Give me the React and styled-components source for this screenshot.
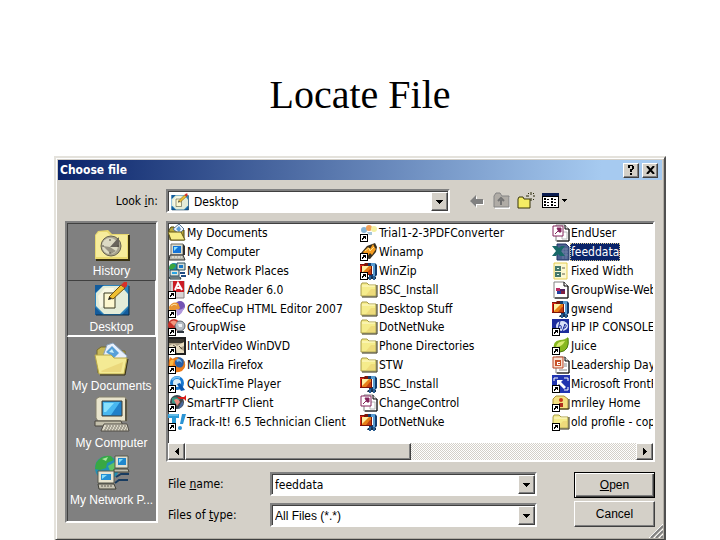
import { useState } from 'react'
import styled, { createGlobalStyle, css } from 'styled-components'

const GlobalStyle = createGlobalStyle`
    * {
        box-sizing: border-box;
    }
    body {
        margin: 0;
        background: #fff;
        color: #000;
        overflow: hidden;
    }
    button,
    input,
    select {
        font: inherit;
        color: inherit;
        padding: 0;
        margin: 0;
        border: 0;
        outline: 0;
        border-radius: 0;
        background: transparent;
    }
`

const ui = '"DejaVu Sans Condensed", "DejaVu Sans", sans-serif'
const sans = '"Liberation Sans", Arial, sans-serif'

const raised = css`
    background: #d4d0c8;
    border: 1px solid;
    border-color: #fff #404040 #404040 #fff;
    box-shadow: inset -1px -1px 0 #808080;
`

const sunken = css`
    border: 2px solid;
    border-color: #808080 #fff #fff #808080;
    box-shadow: inset 1px 1px 0 #404040;
`

const Title = styled.h1`
    margin: 71px 0 37px;
    font: 400 40px/48px 'Liberation Serif', 'Times New Roman', serif;
    text-align: center;
`

const Dialog = styled.section`
    position: relative;
    margin: 0 54px;
    padding: 2px;
    border: 2px solid;
    border-color: #e4e2dc #505050 #404040 #e4e2dc;
    background: #d4d0c8;
    box-shadow: inset 1px 1px 0 #fff, inset -1px -1px 0 #b0aca4;
    font: 12px/16px ${ui};
`

const TitleBar = styled.header`
    display: flex;
    align-items: center;
    gap: 3px;
    height: 20px;
    padding: 0 4px 0 2px;
    background: linear-gradient(90deg, #0a246a, #a6caf0 90%);
`

const Caption = styled.h2`
    flex: 1;
    margin: 0;
    font: 700 12px/16px ${ui};
    color: #fff;
`

const CaptionButton = styled.button`
    display: grid;
    place-items: center;
    width: 16px;
    height: 15px;
    ${raised}
`

const Body = styled.div`
    display: grid;
    grid-template-columns: 93px minmax(0, 1fr);
    gap: 8px;
    padding: 9px 7px 10px;
`

const LookLabel = styled.label`
    align-self: center;
    justify-self: end;
`

const Toolbar = styled.div`
    display: flex;
    align-items: center;
    padding-right: 88px;
`

const Combo = styled.div`
    display: flex;
    flex: 1;
    align-items: center;
    min-width: 0;
    height: 24px;
    padding: 1px 0 0 ${(p) => (p.$icon ? 3 : 2)}px;
    background: #fff;
    ${sunken}

    select,
    input {
        flex: 1;
        min-width: 0;
        height: 18px;
        appearance: none;
        padding-left: ${(p) => (p.$icon ? 5 : 1)}px;
    }
`

const DropButton = styled.span`
    display: grid;
    place-items: center;
    align-self: stretch;
    width: 17px;
    pointer-events: none;
    ${raised}
`

const Tools = styled.div`
    display: flex;
    align-items: center;
    gap: 6px;
    margin-left: 19px;

    button {
        display: grid;
        height: 18px;
    }
`

const Places = styled.nav`
    display: grid;
    grid-template-rows: repeat(5, 1fr);
    height: 302px;
    padding-bottom: 12px;
    background: #808080;
    ${sunken}
`

const Place = styled.button`
    display: flex;
    flex-direction: column;
    align-items: center;
    justify-content: flex-end;
    gap: 2px;
    border: 1px solid transparent;
    font: 12px/16px ${sans};
    color: #fff;
    white-space: nowrap;
    ${(p) =>
        p.$active &&
        css`
            border-color: #404040 #fff #fff #404040;
            border-bottom-width: 2px;
        `}
`

const Right = styled.div`
    display: grid;
    grid-template-rows: 241px auto;
    align-content: start;
    gap: 10px;
    min-width: 0;
`

const FileView = styled.div`
    display: flex;
    flex-direction: column;
    min-width: 0;
    background: #fff;
    ${sunken}
`

const FileList = styled.div`
    display: grid;
    flex: 1;
    grid-auto-flow: column;
    grid-template-rows: repeat(11, 1fr);
    grid-auto-columns: 192px;
    overflow: hidden;
    padding: 1px 0 12px;
`

const FileItem = styled.button`
    display: flex;
    align-items: center;
    text-align: left;
    white-space: nowrap;

    svg {
        flex: none;
    }

    ${(p) =>
        p.$selected &&
        css`
            span {
                background: #0a246a;
                color: #fff;
                outline: 1px dotted #d8c890;
                outline-offset: -1px;
            }
        `}
`

const FileName = styled.span`
    padding: 0 1px;
    line-height: 18px;
`

const ScrollBar = styled.div`
    display: flex;
    height: 17px;
    background: repeating-conic-gradient(#d4d0c8 0 25%, #fff 0 50%) 0 0 / 2px 2px;
`

const ScrollButton = styled.button`
    display: grid;
    place-items: center;
    width: 17px;
    ${raised}
`

const ScrollTrack = styled.div`
    flex: 1;
    display: flex;
`

const ScrollThumb = styled.div`
    width: 50%;
    ${raised}
`

const Form = styled.form`
    display: grid;
    grid-template-columns: minmax(0, 1fr) 81px;
    column-gap: 37px;
    padding-left: 2px;
`

const Fields = styled.div`
    display: grid;
    gap: 7px;
`

const Field = styled.div`
    display: flex;
    align-items: center;

    label {
        width: 102px;
    }
`

const TypeCombo = styled(Combo)`
    font-family: ${sans};
`

const Buttons = styled.div`
    display: grid;
    gap: 3px;
`

const PushButton = styled.button`
    height: 26px;
    ${raised}
    font: 12px/16px ${sans};
    ${(p) =>
        p.$default &&
        css`
            border-color: #000;
            box-shadow: inset 1px 1px 0 #fff, inset -1px -1px 0 #404040,
                inset -2px -2px 0 #808080;
        `}
`

const Grip = styled.svg`
    position: absolute;
    right: 1px;
    bottom: 1px;
`

const DownArrow = () => (
    <svg width="7" height="4" shapeRendering="crispEdges" aria-hidden="true">
        <path d="M0 0H7V1H6V2H5V3H4V4H3V3H2V2H1V1H0Z" />
    </svg>
)

const Shortcut = () => (
    <g shapeRendering="crispEdges">
        <path d="M0 10H8V18H0Z" fill="#000" />
        <path d="M1 11H7V17H1Z" fill="#fff" />
        <path d="M3 12H6V15H5V14H4V15H3V16H2V14H3V13H3Z" fill="#000" />
    </g>
)

const ZipArt = () => (
    <>
        <path d="M7 1H15L17 3V13L15 15H9V12H14V4H7Z" fill="#123c6e" />
        <path d="M11 1H15V14H13V4H11Z" fill="#5a9cd0" />
        <path d="M8 15H16V17H7Z" fill="#14304c" />
        <path d="M9 14H11V18H9ZM13 14H15V18H13Z" fill="#2a5f94" />
        <path d="M0 2H4L5 1H8V4H12V13H0Z" fill="#7c1408" />
        <path d="M0 3H4V4H1V12H0Z" fill="#e02818" />
        <path d="M2 4H11V12H2Z" fill="#e88018" />
        <path d="M2 4H9L2 11Z" fill="#fff0a0" />
        <path d="M10 7H11V12H6Z" fill="#c04010" />
    </>
)

const FolderArt = () => (
    <>
        <path d="M1 4L2 2H7L9 4H16V15H1Z" fill="#f5ec8c" stroke="#a89c48" />
        <path d="M2 5H15" stroke="#fffbd0" />
        <path d="M11 8H15V14H6Z" fill="#ead070" opacity=".6" />
        <path d="M17 4V16H2" fill="none" stroke="#302c10" />
    </>
)

const PageArt = () => (
    <>
        <path d="M4 1H13L17 5V17H4Z" fill="#fff" stroke="#808080" />
        <path d="M13 1V5H17" fill="#ddd" stroke="#000" />
        <path d="M17 5V17H5" stroke="#000" fill="none" />
    </>
)

// small 18px drawings, keyed by kind
const glyphs = {
    documents: (
        <>
            <path d="M1 6L3 3H6L8 6H16V16H2Z" fill="#b8a83c" stroke="#4c4410" />
            <path d="M5 5L11 0L16 5L11 10Z" fill="#eef4ff" stroke="#5a7894" />
            <path d="M8 5L11 2L13 5L11 8Z" fill="#5a9cd8" />
            <path d="M0 8H13L17 16H3Z" fill="#f8ee88" stroke="#645818" />
        </>
    ),
    computer: (
        <>
            <path d="M3 1H15V12H3Z" fill="#dcdccc" stroke="#707068" />
            <path d="M15 1L17 3V12H15Z" fill="#303030" />
            <path d="M5 3H13V10H5Z" fill="#1474d8" />
            <path d="M6 4H10L6 8Z" fill="#8ce4ff" />
            <path d="M2 12H15L17 17H1Z" fill="#b8b8ac" stroke="#303030" />
            <path d="M4 14H14" stroke="#f4f4ec" strokeDasharray="2 1" />
        </>
    ),
    network: (
        <>
            <circle cx="6" cy="6" r="5" fill="#1c8ca8" />
            <path d="M2 3Q6 0 8 4L4 8L1 7Z" fill="#3ca43c" />
            <path d="M9 1H17V8H9Z" fill="#d4dcd4" stroke="#284c5c" />
            <path d="M11 3H15V6H11Z" fill="#1878c8" />
            <path d="M2 8H11V14H2Z" fill="#dce4dc" stroke="#28485c" />
            <path d="M4 10H9V12H4Z" fill="#28a4e4" />
            <path d="M1 15H12L13 17H2Z" fill="#b4bcb4" stroke="#203440" />
            <path d="M12 11H17M13 14H18" stroke="#204c84" strokeWidth="2" />
        </>
    ),
    adobe: (
        <>
            <path d="M2 0H16V17H2Z" fill="#d8d4d4" stroke="#8c8484" />
            <path d="M5 0H16V11H5Z" fill="#cc1c24" />
            <path d="M7 9L10 2L14 9M9 7H13" stroke="#fff" fill="none" strokeWidth="2" />
        </>
    ),
    coffee: (
        <>
            <ellipse cx="12" cy="6" rx="5" ry="5" fill="#7454b4" />
            <path d="M1 7Q4 1 10 3L12 8L7 13H2Z" fill="#e89430" />
            <path d="M8 9Q14 11 16 7Q15 14 9 16Z" fill="#b098dc" />
            <path d="M3 6Q6 3 9 5" stroke="#fce0a0" fill="none" />
        </>
    ),
    groupwise: (
        <>
            <circle cx="6" cy="7" r="6" fill="#c83028" />
            <circle cx="12" cy="8" r="5" fill="#b4bcc4" stroke="#606870" />
            <path d="M2 4Q6 1 9 4L6 8Z" fill="#f49880" />
            <path d="M10 6H14V9H11Z" fill="#f0f4f8" />
            <path d="M9 14H16" stroke="#303840" strokeWidth="2" />
        </>
    ),
    dvd: (
        <>
            <path d="M0 0H18V18H0Z" fill="#202020" />
            <path d="M1 2H16V16H1Z" fill="#a89c84" />
            <path d="M1 2H16V6H1Z" fill="#3c3830" />
            <path d="M1 9Q6 5 9 9L16 5V9L11 11L16 14V16H9L8 12L2 11Z" fill="#e8dcc0" />
            <path d="M5 8L8 10M11 9L14 12" stroke="#5c5040" />
        </>
    ),
    firefox: (
        <>
            <circle cx="10" cy="8" r="7" fill="#2860a8" />
            <path d="M8 3Q13 2 14 7Q12 4 9 6Z" fill="#78b8e8" />
            <path d="M2 1L5 3Q8 0 11 2Q6 4 7 8Q9 13 14 11Q17 8 15 3Q20 10 14 15Q5 19 1 11Q0 6 2 1Z" fill="#ec7c18" />
            <path d="M2 5Q4 3 6 4L5 9L2 10Z" fill="#fcb840" />
        </>
    ),
    quicktime: (
        <>
            <circle cx="9" cy="8" r="7" fill="#1878d0" />
            <circle cx="9" cy="8" r="4" fill="#d8ecf8" />
            <path d="M9 9L12 8L17 15L13 16Z" fill="#0c58b0" />
            <path d="M4 5Q7 1 12 3" stroke="#70c0f4" fill="none" strokeWidth="2" />
        </>
    ),
    ftp: (
        <>
            <circle cx="9" cy="8" r="7" fill="#40484c" />
            <path d="M4 4Q8 2 12 5L9 10L4 9Z" fill="#389884" />
            <path d="M6 6Q10 3 12 8L9 12Z" fill="#ec8c80" />
            <path d="M9 3H16L18 1V7L16 5H11Z" fill="#d81c18" />
            <path d="M13 9L15 7Q16 13 10 15Z" fill="#4868a0" />
        </>
    ),
    trackit: (
        <>
            <path d="M0 1H11V5H8V13H4V5H0Z" fill="#2c9cd8" />
            <path d="M1 2H10" stroke="#9cdcf8" />
            <path d="M14 1H18L15 11H12Z" fill="#2c94d4" />
            <circle cx="12" cy="15" r="2" fill="#2c94d4" />
        </>
    ),
    pdf: (
        <>
            <circle cx="4" cy="6" r="3" fill="#88b4d4" />
            <circle cx="9" cy="4" r="3" fill="#f0a058" />
            <circle cx="14" cy="5" r="3" fill="#f4f0a0" />
            <path d="M7 8H12V11H9Z" fill="#a8c8dc" />
        </>
    ),
    winamp: (
        <>
            <path d="M1 10L7 3L15 0L17 4L16 9L10 16L3 15Z" fill="#383020" />
            <path d="M3 9L8 4L10 6L13 1L15 5L16 6L12 12L10 10L7 14Z" fill="#f49c20" />
            <path d="M5 8L9 5L10 8L14 4" stroke="#ffe48c" fill="none" />
        </>
    ),
    zip: <ZipArt />,
    folder: <FolderArt />,
    access: (
        <>
            <PageArt />
            <path d="M10 8H15V15H10Z" fill="none" stroke="#b8b8b8" />
            <path d="M1 2H11V12H1Z" fill="#fff" stroke="#84245c" />
            <path d="M3 10L7 6M5 4H9V8H7Z" stroke="#84245c" fill="#84245c" />
        </>
    ),
    excel: (
        <>
            <path d="M5 1H14L17 4V17H5Z" fill="#4c6090" stroke="#203464" />
            <path d="M8 6H16M8 9H16M8 12H16M11 5V16M14 5V16" stroke="#6c80a4" />
            <path d="M0 3H5L7 5L9 3H13L9 8L13 13H8L6 11L4 13H0L4 8Z" fill="#186868" />
        </>
    ),
    fixed: (
        <>
            <path d="M2 1H15V17H2Z" fill="#fcf8d0" stroke="#e4cc50" />
            <path d="M3 4H9V9H3ZM3 10H9V15H3Z" fill="#44786c" />
            <path d="M5 6H7V7H5ZM5 12H7V13H5Z" fill="#e0f8ec" />
            <path d="M10 6H13M10 12H13" stroke="#606050" />
        </>
    ),
    web: (
        <>
            <path d="M2 1H12L16 5V17H2Z" fill="#fff" stroke="#808080" />
            <path d="M12 1V5H16V17H3" stroke="#000" fill="none" />
            <path d="M4 7H8V10H4Z" fill="#b82860" />
            <path d="M8 8H13V10H8Z" fill="#502060" />
            <path d="M5 10H9V13H5Z" fill="#2040a0" />
            <path d="M9 10H13V13H9Z" fill="#802040" />
        </>
    ),
    hp: (
        <>
            <path d="M0 1H17V15H0Z" fill="#1c2c9c" />
            <ellipse cx="10" cy="8" rx="6" ry="5" fill="#d8e0f8" />
            <path d="M8 3L6 11M7 8Q10 6 9 11M13 6L10 14M12 7Q16 6 13 10H11" stroke="#1c2c9c" fill="none" />
        </>
    ),
    juice: (
        <>
            <path d="M2 13Q0 4 8 3Q13 3 16 0Q18 14 8 15Z" fill="#88b820" />
            <path d="M4 10Q5 4 13 4Q10 10 4 10Z" fill="#d8ec70" />
            <path d="M16 1Q18 14 8 15" stroke="#48780c" fill="none" />
        </>
    ),
    ppt: (
        <>
            <PageArt />
            <path d="M12 8H15M12 10H15M7 14H15" stroke="#888" />
            <path d="M1 1H11V12H1Z" fill="#f8e0d0" stroke="#b84424" />
            <path d="M3 4H9V10H3Z" fill="#c85028" />
            <path d="M5 6H8V7H6V8H8V9H5Z" fill="#fff" />
        </>
    ),
    msfront: (
        <>
            <path d="M0 0H18V18H0Z" fill="#2034b0" />
            <path d="M2 6V3H6M12 3H16V6M16 12V15H12" stroke="#fff" fill="none" />
            <path d="M5 5H11L9 7L14 12L12 14L7 9L5 11Z" fill="#fff" />
        </>
    ),
    home: (
        <>
            <path d="M1 5L4 2H12L16 5V15H1Z" fill="#f4e080" stroke="#a89038" />
            <circle cx="9" cy="6" r="2" fill="#c83818" />
            <path d="M7 9H11V13H7Z" fill="#b03020" />
            <path d="M17 5V15H8" stroke="#282008" fill="none" />
        </>
    ),
}

const SmallIcon = ({ kind, link }) => (
    <svg width="18" height="18" viewBox="0 0 18 18" aria-hidden="true">
        {glyphs[kind]}
        {link && <Shortcut />}
    </svg>
)

const DesktopIcon = ({ size }) => (
    <svg width={size} height={size} viewBox="0 0 36 34" aria-hidden="true">
        <path d="M1 3H35V33H1Z" fill="#2c84bc" />
        <path d="M1 3H10L1 11ZM1 33V25L9 33ZM35 33H28L35 25Z" fill="#145c9c" />
        <path d="M35 4V33H2" stroke="#082c48" fill="none" />
        <path d="M9 4H27L34 12V24L26 32H10L2 24V11Z" fill="#e4ecd8" />
        <path d="M11 6H20L16 20L6 26L4 14Z" fill="#f8f8e4" />
        <path d="M10 11H21V26H10Z" fill="#fdf8d0" stroke="#383820" />
        <path d="M15 15L27 3L31 6L19 17Z" fill="#f0c030" stroke="#705010" />
        <path d="M27 3L30 0H33V4L31 6Z" fill="#d83028" />
        <path d="M15 15L14 18L18 17Z" fill="#181818" />
    </svg>
)

const HistoryIcon = () => (
    <svg width="36" height="32" viewBox="0 0 36 32" aria-hidden="true">
        <path d="M1 6L4 2L14 1L18 5H35V30H1Z" fill="#e8d870" />
        <path d="M2 6L5 3H13L16 6H33V28H2Z" fill="#f6ec9c" />
        <path d="M35 6V31H2" stroke="#383010" strokeWidth="2" fill="none" />
        <circle cx="17" cy="17" r="10" fill="#a8a490" stroke="#686450" />
        <circle cx="16" cy="17" r="8" fill="#dcdac4" />
        <path d="M16 18L25 8V18Z" fill="#68645c" />
        <path d="M9 17L16 18L22 22L17 25Z" fill="#989484" />
        <path d="M16 10V12M16 23V25M8 17H10M23 17H25" stroke="#504c40" />
    </svg>
)

const DocumentsIcon = () => (
    <svg width="36" height="34" viewBox="0 0 36 34" aria-hidden="true">
        <path d="M3 12V8L7 5H12L15 9H31V31H4Z" fill="#c8b858" stroke="#786c28" />
        <path d="M9 14L13 3L19 1L33 14L30 20H12Z" fill="#e8f0fc" stroke="#88a0bc" />
        <path d="M12 10L18 4L25 11L20 16Z" fill="#58a0d8" />
        <path d="M15 10L18 7L20 11Z" fill="#c8f0fc" />
        <path d="M1 13H17L20 16H33L30 32H5Z" fill="#f4ea94" stroke="#b8a848" />
        <path d="M7 29L29 20L27 30H8Z" fill="#e4cc6c" opacity=".6" />
        <path d="M34 17L31 33H6" stroke="#383010" fill="none" />
    </svg>
)

const ComputerIcon = () => (
    <svg width="36" height="37" viewBox="0 0 36 37" aria-hidden="true">
        <path d="M2 3L5 1H31L33 4V25H4L2 22Z" fill="#e8e4cc" stroke="#84806c" />
        <path d="M31 2L33 4V25H31Z" fill="#585444" />
        <path d="M8 5H28V20H8Z" fill="#2080c8" stroke="#403c30" />
        <path d="M9 6H26L17 19H9Z" fill="#48b8f0" />
        <path d="M10 7H20L12 16H10Z" fill="#88e0fc" />
        <path d="M1 25H27L29 30H1Z" fill="#c4c0ac" stroke="#48443c" />
        <path d="M10 28H33L35 35H7Z" fill="#dcd8c8" stroke="#504c44" />
        <path d="M12 30H32M11 32H33M10 34H34" stroke="#706c60" strokeDasharray="2 1" />
    </svg>
)

const NetworkIcon = () => (
    <svg width="36" height="36" viewBox="0 0 36 36" aria-hidden="true">
        <circle cx="13" cy="14" r="12" fill="#2090b4" />
        <path d="M2 9Q8 0 17 2L20 6L13 9L12 14L6 16L1 15Z" fill="#38a844" />
        <path d="M14 12L21 8L23 16L17 19Z" fill="#60c464" />
        <path d="M8 5L14 3L12 7Z" fill="#a8e8a0" />
        <path d="M21 2H34V14H21Z" fill="#e0e0d0" stroke="#585848" />
        <path d="M24 4H32V11H24Z" fill="#2088cc" />
        <path d="M25 5H29L25 9Z" fill="#80dcf8" />
        <path d="M20 15H34L35 18H20Z" fill="#bcbcac" stroke="#48483c" />
        <path d="M22 23L27 20H35M21 29L25 26H34" stroke="#183c60" strokeWidth="2" fill="none" />
        <path d="M4 17H20V29H4Z" fill="#e8e4d0" stroke="#58584c" />
        <path d="M7 20H17V26H7Z" fill="#2490d4" />
        <path d="M8 21H13L8 25Z" fill="#88e0fc" />
        <path d="M4 30H20L22 35H5Z" fill="#c8c4b4" stroke="#404038" />
        <path d="M7 32H19" stroke="#605c54" strokeDasharray="2 1" />
    </svg>
)

const places = [
    { name: 'History', icon: <HistoryIcon /> },
    { name: 'Desktop', icon: <DesktopIcon size={36} /> },
    { name: 'My Documents', icon: <DocumentsIcon /> },
    { name: 'My Computer', icon: <ComputerIcon /> },
    { name: 'My Network P...', icon: <NetworkIcon /> },
]

const files = [
    ['My Documents', 'documents'],
    ['My Computer', 'computer'],
    ['My Network Places', 'network'],
    ['Adobe Reader 6.0', 'adobe', true],
    ['CoffeeCup HTML Editor 2007', 'coffee', true],
    ['GroupWise', 'groupwise', true],
    ['InterVideo WinDVD', 'dvd', true],
    ['Mozilla Firefox', 'firefox', true],
    ['QuickTime Player', 'quicktime', true],
    ['SmartFTP Client', 'ftp', true],
    ['Track-It! 6.5 Technician Client', 'trackit', true],
    ['Trial1-2-3PDFConverter', 'pdf', true],
    ['Winamp', 'winamp', true],
    ['WinZip', 'zip', true],
    ['BSC_Install', 'folder'],
    ['Desktop Stuff', 'folder'],
    ['DotNetNuke', 'folder'],
    ['Phone Directories', 'folder'],
    ['STW', 'folder'],
    ['BSC_Install', 'zip'],
    ['ChangeControl', 'access'],
    ['DotNetNuke', 'zip'],
    ['EndUser', 'access'],
    ['feeddata', 'excel'],
    ['Fixed Width', 'fixed'],
    ['GroupWise-Web', 'web'],
    ['gwsend', 'zip'],
    ['HP IP CONSOLE', 'hp', true],
    ['Juice', 'juice', true],
    ['Leadership Day', 'ppt'],
    ['Microsoft FrontPage', 'msfront', true],
    ['mriley Home', 'home', true],
    ['old profile - copy', 'folder', true],
]

const App = () => {
    const [place, setPlace] = useState('Desktop')
    const [selected, setSelected] = useState(23)
    const [fileName, setFileName] = useState('feeddata')

    const pick = (index) => {
        setSelected(index)
        setFileName(files[index][0])
    }

    return (
        <>
            <GlobalStyle />
            <Title>Locate File</Title>
            <Dialog>
                <TitleBar>
                    <Caption>Choose file</Caption>
                    <CaptionButton aria-label="Help">
                        <svg width="8" height="10" shapeRendering="crispEdges">
                            <path d="M1 0H6V1H7V4H6V5H5V7H3V4H5V1H3V3H1ZM3 8H5V10H3Z" />
                        </svg>
                    </CaptionButton>
                    <CaptionButton aria-label="Close">
                        <svg width="9" height="8" viewBox="0 0 9 8">
                            <path d="M1 0L8 8M8 0L1 8" stroke="#000" strokeWidth="2" />
                        </svg>
                    </CaptionButton>
                </TitleBar>
                <Body>
                    <LookLabel htmlFor="look">
                        Look <u>i</u>n:
                    </LookLabel>
                    <Toolbar>
                        <Combo $icon>
                            <DesktopIcon size={18} />
                            <select id="look">
                                <option>Desktop</option>
                            </select>
                            <DropButton>
                                <DownArrow />
                            </DropButton>
                        </Combo>
                        <Tools>
                            <button aria-label="Back">
                                <svg width="18" height="18">
                                    <path d="M2 10L8 4V8H15V13H8V16Z" fill="#fff" />
                                    <path d="M1 9L7 3V7H14V12H7V15Z" fill="#808080" />
                                </svg>
                            </button>
                            <button aria-label="Up one level">
                                <svg width="18" height="18">
                                    <path d="M2 5L4 2H8L10 5H17V17H2Z" fill="#fff" />
                                    <path d="M1 4L3 1H7L9 4H16V15H1Z" fill="#b0aca6" stroke="#848484" />
                                    <path d="M8 13V8M5 9L8 6L11 9" stroke="#747474" strokeWidth="2" fill="none" />
                                </svg>
                            </button>
                            <button aria-label="New folder">
                                <svg width="18" height="18">
                                    <path d="M1 7L2 5H6L7 7H13V16H1Z" fill="#f4ec64" stroke="#383408" />
                                    <path d="M14 0V3M14 6V9M9 4H12M16 4H18M11 1L12 2M17 1L16 2M16 7L17 8" stroke="#282808" />
                                </svg>
                            </button>
                            <button aria-label="View">
                                <svg width="26" height="18" shapeRendering="crispEdges">
                                    <path d="M1 1H18V16H1Z" fill="#000" />
                                    <path d="M1 1H18V4H1Z" fill="#0a1c50" />
                                    <path d="M2 5H17V15H2Z" fill="#fff" />
                                    <path d="M3 6H5V8H3ZM6 7H8V8H6ZM10 6H12V8H10ZM13 7H15V8H13ZM3 9H5V11H3ZM6 10H8V11H6ZM10 9H12V11H10ZM13 10H15V11H13ZM3 12H5V14H3ZM6 13H8V14H6ZM10 12H12V14H10ZM13 13H15V14H13Z" />
                                    <path d="M21 7H26V8H25V9H24V10H23V9H22V8H21Z" />
                                </svg>
                            </button>
                        </Tools>
                    </Toolbar>
                    <Places>
                        {places.map((p) => (
                            <Place
                                key={p.name}
                                $active={p.name === place}
                                onClick={() => setPlace(p.name)}
                            >
                                {p.icon}
                                {p.name}
                            </Place>
                        ))}
                    </Places>
                    <Right>
                        <FileView>
                            <FileList>
                                {files.map(([name, kind, link], i) => (
                                    <FileItem
                                        key={i}
                                        $selected={i === selected}
                                        onClick={() => pick(i)}
                                    >
                                        <SmallIcon kind={kind} link={link} />
                                        <FileName>{name}</FileName>
                                    </FileItem>
                                ))}
                            </FileList>
                            <ScrollBar>
                                <ScrollButton aria-label="Scroll left">
                                    <svg width="4" height="7" shapeRendering="crispEdges">
                                        <path d="M4 0V7H3V6H2V5H1V4H0V3H1V2H2V1H3V0Z" />
                                    </svg>
                                </ScrollButton>
                                <ScrollTrack>
                                    <ScrollThumb />
                                </ScrollTrack>
                                <ScrollButton aria-label="Scroll right">
                                    <svg width="4" height="7" shapeRendering="crispEdges">
                                        <path d="M0 0V7H1V6H2V5H3V4H4V3H3V2H2V1H1V0Z" />
                                    </svg>
                                </ScrollButton>
                            </ScrollBar>
                        </FileView>
                        <Form onSubmit={(e) => e.preventDefault()}>
                            <Fields>
                                <Field>
                                    <label htmlFor="name">
                                        File <u>n</u>ame:
                                    </label>
                                    <Combo>
                                        <input
                                            id="name"
                                            value={fileName}
                                            onChange={(e) => setFileName(e.target.value)}
                                        />
                                        <DropButton>
                                            <DownArrow />
                                        </DropButton>
                                    </Combo>
                                </Field>
                                <Field>
                                    <label htmlFor="type">
                                        Files of <u>t</u>ype:
                                    </label>
                                    <TypeCombo>
                                        <select id="type">
                                            <option>All Files (*.*)</option>
                                        </select>
                                        <DropButton>
                                            <DownArrow />
                                        </DropButton>
                                    </TypeCombo>
                                </Field>
                            </Fields>
                            <Buttons>
                                <PushButton $default>
                                    <u>O</u>pen
                                </PushButton>
                                <PushButton type="button">Cancel</PushButton>
                            </Buttons>
                        </Form>
                    </Right>
                </Body>
                <Grip width="14" height="14" aria-hidden="true">
                    <path d="M0 14L14 0M5 14L14 5M10 14L14 10" stroke="#fff" />
                    <path d="M2 14L14 2M7 14L14 7M12 14L14 12" stroke="#808080" strokeWidth="2" />
                </Grip>
            </Dialog>
        </>
    )
}

export default App
